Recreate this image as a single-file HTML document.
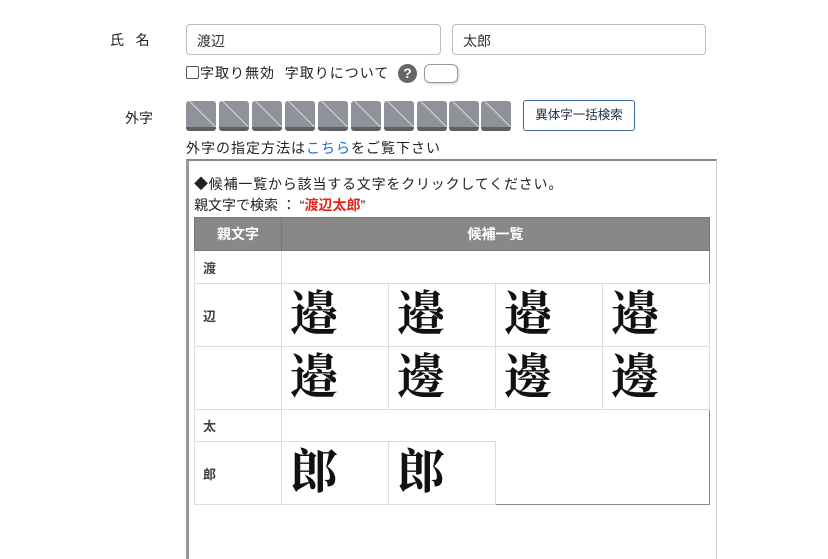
<!DOCTYPE html>
<html><head><meta charset="utf-8"><style>
*{box-sizing:border-box;margin:0;padding:0}
body{width:828px;height:536px;overflow:hidden;background:#fff;font-family:"Liberation Sans","Noto Sans CJK JP",sans-serif;color:#222;position:relative}
.a{position:absolute}
.inp{position:absolute;height:31px;border:1px solid #bbb;border-radius:4px;font-size:14px;padding:6px 10px;color:#333}
.box{position:absolute;top:101px;width:30px;height:30px;border-radius:3px;background:#8f9299;border-bottom:4px solid #5e6066;overflow:hidden}
.box:after{content:"";position:absolute;left:-4px;top:12px;width:40px;height:1px;background:#d8d8dc;transform:rotate(45deg)}
table{position:absolute;left:194px;top:217px;border-collapse:collapse;font-size:13px}
td,th{border:1px solid #ddd}
th{background:#888;color:#fff;height:33px;font-weight:bold;font-size:14px;border-color:#777}
td.p{width:87px;padding-left:8px;color:#444;font-weight:bold}
td.c{width:107px;height:63px;font-family:"Liberation Serif","Noto Serif CJK SC",serif;font-size:48px;font-weight:bold;padding-left:8px;line-height:1;color:#111}
</style></head><body>
<div class="a" style="left:110px;top:30px;font-size:14px">氏&nbsp;&nbsp;&nbsp;名</div>
<div class="inp" style="left:186px;top:24px;width:255px">渡辺</div>
<div class="inp" style="left:452px;top:24px;width:254px">太郎</div>
<div class="a" style="left:186px;top:64px;font-size:14px;line-height:18px;letter-spacing:1px"><span style="display:inline-block;width:13px;height:13px;border:1px solid #555;vertical-align:-1px;border-radius:2px;margin-right:1px"></span>字取り無効&nbsp;&nbsp;字取りについて</div>
<div class="a" style="left:398px;top:64px;width:19px;height:19px;border-radius:50%;background:#666;color:#fff;font-weight:bold;font-size:14px;text-align:center;line-height:19px">?</div>
<div class="a" style="left:424px;top:64px;width:34px;height:19px;border:1px solid #999;border-radius:6px;box-shadow:1px 1px 2px #ccc"></div>
<div class="a" style="left:125px;top:108px;font-size:14px">外字</div>
<div class="box" style="left:186px"></div><div class="box" style="left:219px"></div><div class="box" style="left:252px"></div><div class="box" style="left:285px"></div><div class="box" style="left:318px"></div><div class="box" style="left:351px"></div><div class="box" style="left:384px"></div><div class="box" style="left:417px"></div><div class="box" style="left:449px"></div><div class="box" style="left:481px"></div>
<div class="a" style="left:523px;top:100px;width:112px;height:31px;border:1px solid #3a6a9a;border-radius:3px;font-size:12.5px;color:#234;text-align:center;line-height:29px">異体字一括検索</div>
<div class="a" style="left:186px;top:138px;font-size:14px;letter-spacing:1px">外字の指定方法は<span style="color:#1a6fc9">こちら</span>をご覧下さい</div>
<div class="a" style="left:186px;top:159px;width:531px;height:400px;border-top:2px solid #888;border-left:3px solid #999;border-right:1px solid #ccc"></div>
<div class="a" style="left:194px;top:174px;font-size:14px;letter-spacing:0.8px">◆候補一覧から該当する文字をクリックしてください。</div>
<div class="a" style="left:194px;top:195px;font-size:14px">親文字で検索 ： “<b style="color:#e0261b">渡辺太郎</b>”</div>
<table>
<tr><th style="width:87px">親文字</th><th colspan="4" style="width:428px">候補一覧</th></tr>
<tr><td class="p" style="height:33px">渡</td><td colspan="4" style="border-right-color:#888"></td></tr>
<tr><td class="p">辺</td><td class="c">邉</td><td class="c">邉</td><td class="c">邉</td><td class="c">邉</td></tr>
<tr><td class="p"></td><td class="c">邉</td><td class="c">邊</td><td class="c">邊</td><td class="c">邊</td></tr>
<tr><td class="p" style="height:32px">太</td><td colspan="4" style="border-right-color:#888;border-bottom:none"></td></tr>
<tr><td class="p">郎</td><td class="c">郎</td><td class="c">郎</td><td colspan="2" style="border:none;border-right:1px solid #888;border-bottom:1px solid #888"></td></tr>
</table>
</body></html>
